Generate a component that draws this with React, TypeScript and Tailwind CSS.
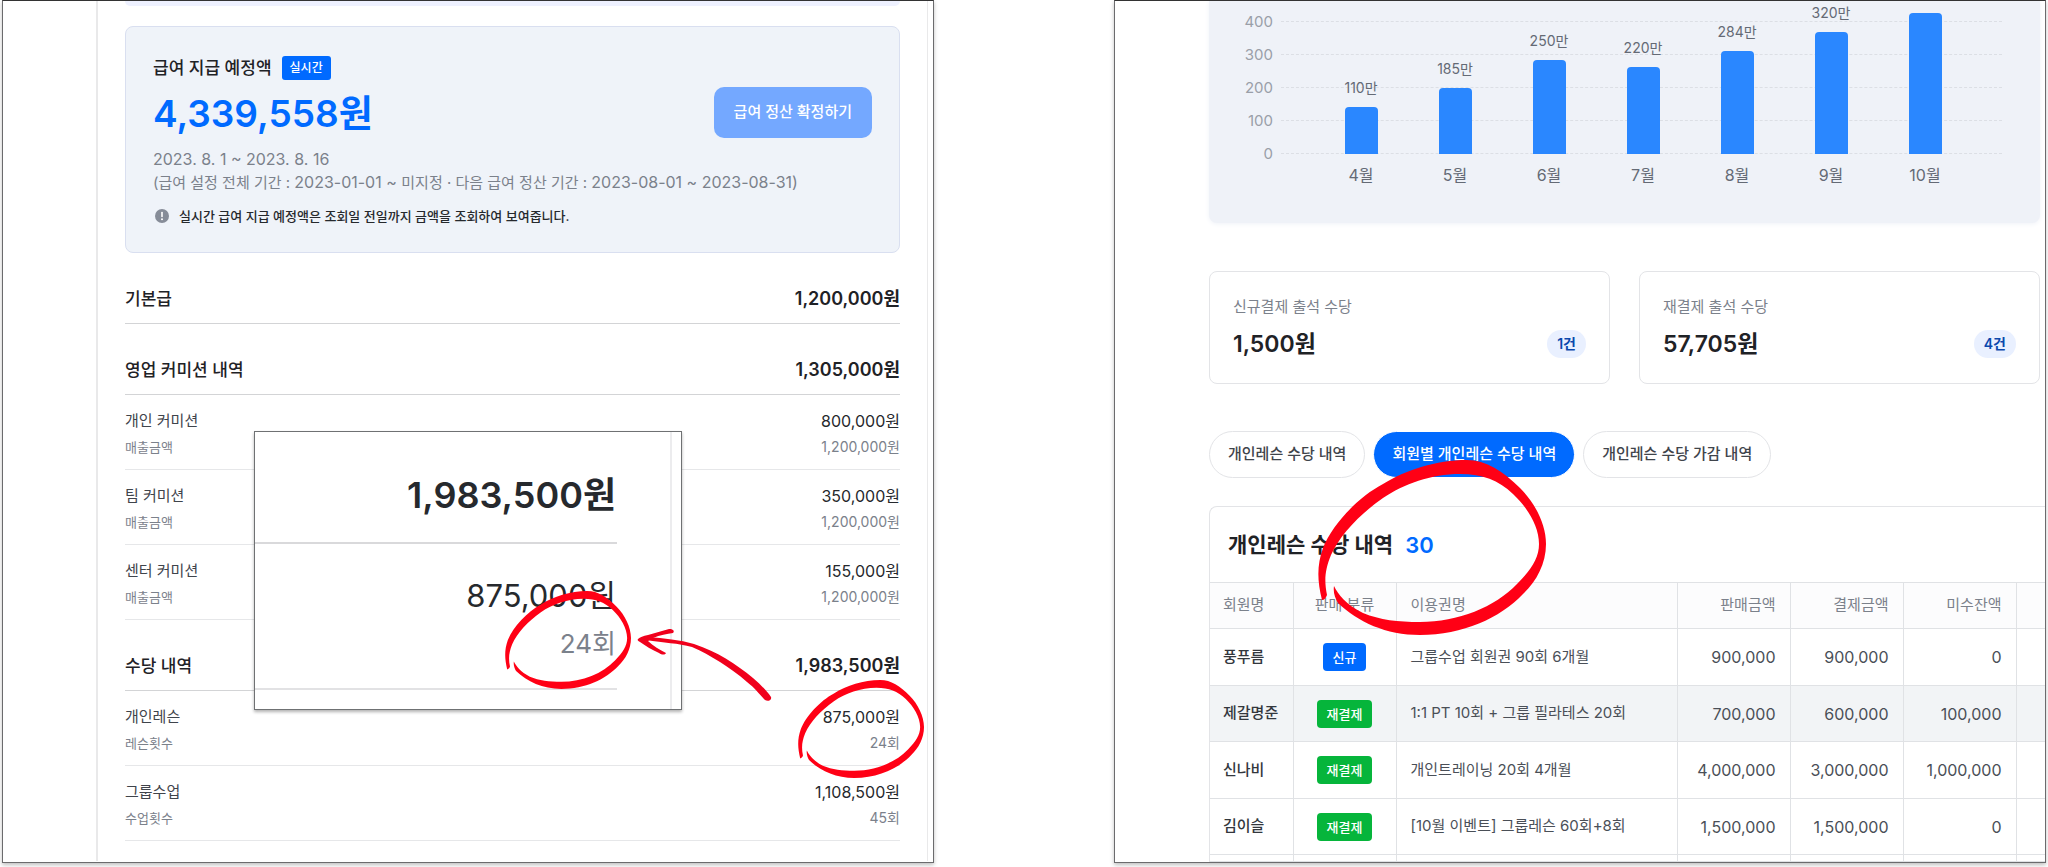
import React from 'react';
import clsx from 'clsx';

interface PayRow {
  label: string;
  sub: string;
  amount: string;
  subAmount: string;
}

interface PaySection {
  title: string;
  total: string;
  rows: PayRow[];
}

const sections: PaySection[] = [
  { title: '기본급', total: '1,200,000원', rows: [] },
  {
    title: '영업 커미션 내역',
    total: '1,305,000원',
    rows: [
      { label: '개인 커미션', sub: '매출금액', amount: '800,000원', subAmount: '1,200,000원' },
      { label: '팀 커미션', sub: '매출금액', amount: '350,000원', subAmount: '1,200,000원' },
      { label: '센터 커미션', sub: '매출금액', amount: '155,000원', subAmount: '1,200,000원' },
    ],
  },
  {
    title: '수당 내역',
    total: '1,983,500원',
    rows: [
      { label: '개인레슨', sub: '레슨횟수', amount: '875,000원', subAmount: '24회' },
      { label: '그룹수업', sub: '수업횟수', amount: '1,108,500원', subAmount: '45회' },
    ],
  },
];

const ticks = ['400', '300', '200', '100', '0'];

const months = [
  { name: '4월', label: '110만', height: 47 },
  { name: '5월', label: '185만', height: 66 },
  { name: '6월', label: '250만', height: 94 },
  { name: '7월', label: '220만', height: 87 },
  { name: '8월', label: '284만', height: 103 },
  { name: '9월', label: '320만', height: 122 },
  { name: '10월', label: '', height: 141 },
];

const stats = [
  { label: '신규결제 출석 수당', value: '1,500원', count: '1건' },
  { label: '재결제 출석 수당', value: '57,705원', count: '4건' },
];

const tabs = ['개인레슨 수당 내역', '회원별 개인레슨 수당 내역', '개인레슨 수당 가감 내역'];

const members = [
  { name: '풍푸름', kind: '신규', ticket: '그룹수업 회원권 90회 6개월', sale: '900,000', paid: '900,000', due: '0' },
  { name: '제갈명준', kind: '재결제', ticket: '1:1 PT 10회 + 그룹 필라테스 20회', sale: '700,000', paid: '600,000', due: '100,000' },
  { name: '신나비', kind: '재결제', ticket: '개인트레이닝 20회 4개월', sale: '4,000,000', paid: '3,000,000', due: '1,000,000' },
  { name: '김이슬', kind: '재결제', ticket: '[10월 이벤트] 그룹레슨 60회+8회', sale: '1,500,000', paid: '1,500,000', due: '0' },
];

const MarkerCircle: React.FC<{ className: string }> = ({ className }) => (
  <svg className={clsx('pointer-events-none absolute', className)} viewBox="0 0 228 175" preserveAspectRatio="none" fill="#ff0015" aria-hidden="true">
    <path d="M4 140 C-1 120 -1 105 5 88 C14 65 40 37 65 24 C88 10 118 0 149 0 C168 0 185 11 202 28 C217 43 228 64 228 84 C228 104 218 122 205 134 C182 158 145 175 102 175 C68 175 40 162 20 143 C17 138 15 132 16 126 C20 134 28 145 45 153 C62 160 80 162 102 162 C140 162 177 147 199 124 C213 110 221 98 221 84 C221 66 209 47 195 34 C180 20 165 14 142 14 C113 14 86 24 65 38 C42 54 22 75 13 95 C7 110 6 120 9 135 C8 138 6 140 4 140 Z" />
  </svg>
);

const MarkerArrow: React.FC = () => (
  <svg className="pointer-events-none absolute left-[631px] top-[623px] h-20 w-[140px]" viewBox="0 0 140 80" fill="#f0001c" aria-hidden="true">
    <path d="M14 13 C30 14 46 16 60 20 C84 28 102 40 119 54 C127 61 133 67 137 73 C138 76 134 78 131 76 C126 71 121 64 113 58 C104 50 95 44 86 38 C76 32 68 27 58 23 C44 19 30 19 12 16 Z" />
    <path d="M4 15 C6 13 9 12 14 11 L35 5 C39 5 41 7 39 9 C33 10 26 11 19 14 L14 17 C19 22 26 26 32 29 C31 31 28 31 25 29 C18 26 12 22 6 18 C4 17 3 16 4 15 Z" />
  </svg>
);

// Enlarged view of the lesson allowance amount
const Magnified: React.FC = () => (
  <div className="absolute left-[251px] top-[430px] flex w-[428px] border border-[#6f7173] bg-white pr-[9px] shadow-[0_2px_3px_rgba(0,0,0,0.3)]">
    <div className="flex-1 border-r-2 border-[#ececee] pb-[19px] pr-[53px] text-right text-[#26292d]">
      <div className="border-b-2 border-[#d9d9db] pb-[26px] pr-px pt-[42px] text-4xl font-semibold leading-[42px]">1,983,500원</div>
      <div className="border-b-2 border-[#e2e2e4] pb-7 pr-px pt-8">
        <div className="text-[31px] leading-10">875,000원</div>
        <div className="mt-3 text-[26px] leading-8 text-[#7b818b]">24회</div>
      </div>
    </div>
  </div>
);

const PayPanel: React.FC = () => (
  <section className="relative border border-[#6b6b6d] border-t-[#333] bg-white shadow-[0_2px_4px_rgba(0,0,0,0.25)]">
    <div className="ml-[93px] mr-[5px] border-l-2 border-r border-[#e9e9ea] px-[27px] pb-5">
      <div className="h-[5px] rounded-b-lg bg-[#eef1ff]" />

      <div className="mt-5 flex items-start rounded-lg border border-[#d9dff0] bg-[#eff3f9] px-[27px] pb-[25px]">
        <div className="w-0 flex-1 whitespace-nowrap">
          <div className="mt-[29px] flex items-center gap-2.5">
            <h2 className="text-[17px] font-medium leading-6 text-[#1f2226]">급여 지급 예정액</h2>
            <span className="rounded-[3px] bg-[#006aff] px-2 text-xs font-medium leading-6 text-white">실시간</span>
          </div>
          <p className="mt-3.5 text-[37px] font-semibold leading-10 text-[#006aff]">4,339,558원</p>
          <p className="mt-3.5 text-base leading-[23px] text-[#7b818b]">2023. 8. 1 ~ 2023. 8. 16</p>
          <p className="text-[15px] leading-[23px] text-[#7b818b]">
            (급여 설정 전체 기간 : <span className="text-base leading-[23px]">2023-01-01 ~ </span>미지정 · 다음 급여 정산 기간 :{' '}
            <span className="text-base leading-[23px]">2023-08-01 ~ 2023-08-31)</span>
          </p>
          <p className="mt-[11px] flex items-center gap-2.5 pl-0.5 text-[13px] font-medium leading-[22px] text-[#26292d]">
            <svg className="h-3.5 w-3.5" viewBox="0 0 14 14" aria-hidden="true">
              <circle cx="7" cy="7" r="7" fill="#868c98" />
              <path d="M7 3.5v4" stroke="#fff" strokeWidth="1.6" strokeLinecap="round" />
              <circle cx="7" cy="10.3" r="1" fill="#fff" />
            </svg>
            실시간 급여 지급 예정액은 조회일 전일까지 금액을 조회하여 보여줍니다.
          </p>
        </div>
        <button type="button" className="mt-[60px] h-[51px] shrink-0 whitespace-nowrap rounded-[10px] bg-[#74a8ff] px-5 text-[15px] font-medium text-white">
          급여 정산 확정하기
        </button>
      </div>

      {sections.map((section) => (
        <div key={section.title}>
          <div className="flex h-[71px] items-start justify-between border-b border-[#d3d4d6] pt-[34px] font-medium leading-6 text-[#1f2226]">
            <h3 className="text-[17px]">{section.title}</h3>
            <span className="text-lg font-semibold leading-6">{section.total}</span>
          </div>
          {section.rows.map((row) => (
            <div key={row.label} className="flex h-[75px] justify-between border-b border-[#e6e7e9] pt-[15px]">
              <div className="text-[15px] text-[#3f444b]">
                <p className="leading-[22px]">{row.label}</p>
                <p className="mt-1 text-[13px] leading-[22px] text-[#7b818b]">{row.sub}</p>
              </div>
              <div className="text-right text-[#26292d]">
                <p className="text-base leading-[22px]">{row.amount}</p>
                <p className="mt-1 text-sm leading-[22px] text-[#7b818b]">{row.subAmount}</p>
              </div>
            </div>
          ))}
        </div>
      ))}
    </div>

    <Magnified />
    <MarkerCircle className="left-[502px] top-[590px] h-[98px] w-[126px]" />
    <MarkerCircle className="left-[795px] top-[679px] h-[98px] w-[126px]" />
    <MarkerArrow />
  </section>
);

const Chart: React.FC = () => (
  <div className="mr-[5px] grid grid-cols-[64px_1fr] gap-x-2 rounded-b-lg bg-[#eff2f8] pb-[37px] pr-[38px] pt-5 shadow-[0_1px_5px_#eff2f8]">
    <div className="-my-2.5 flex flex-col justify-between text-right text-[15px] text-[#9a9fa8]">
      {ticks.map((tick) => (
        <span key={tick} className="leading-[21px]">{tick}</span>
      ))}
    </div>
    <div className="grid h-[133px]">
      <div className="col-start-1 row-start-1 flex flex-col justify-between">
        {ticks.map((tick) => (
          <div key={tick} className="border-t border-dashed border-[#dcdfe5]" />
        ))}
      </div>
      <div className="col-start-1 row-start-1 flex h-[133px] items-end pl-[33px] pr-[30px]">
        {months.map((month) => (
          <div key={month.name} className="flex flex-1 flex-col items-center">
            <span className="mb-2 text-sm leading-[22px] text-[#646a75]">{month.label}</span>
            <div className="w-[33px] rounded-t bg-[#2a87ff]" style={{ height: month.height }} />
          </div>
        ))}
      </div>
    </div>
    <div className="col-start-2 mt-2.5 flex pl-[33px] pr-[30px] text-center text-base leading-[22px] text-[#646a75]">
      {months.map((month) => (
        <span key={month.name} className="flex-1">{month.name}</span>
      ))}
    </div>
  </div>
);

const LessonPanel: React.FC = () => (
  <section className="relative overflow-hidden border border-[#6b6b6d] border-t-[#333] bg-white pl-[94px] shadow-[0_2px_4px_rgba(0,0,0,0.25)]">
    <Chart />

    <div className="mr-[5px] mt-12 grid grid-cols-2 gap-[29px]">
      {stats.map((stat) => (
        <div key={stat.label} className="h-[113px] rounded-lg border border-[#e3e4e7] px-[23px] pt-6">
          <p className="text-[15px] leading-[22px] text-[#7b818b]">{stat.label}</p>
          <div className="mt-3 flex items-center justify-between">
            <span className="text-[23px] font-semibold leading-7 text-[#1f2226]">{stat.value}</span>
            <span className="rounded-full bg-[#e9f0ff] px-2.5 text-sm font-semibold leading-7 text-[#0b48ad]">{stat.count}</span>
          </div>
        </div>
      ))}
    </div>

    <div className="mt-[47px] flex gap-2">
      {tabs.map((tab, i) => (
        <button
          key={tab}
          type="button"
          className={clsx(
            'h-[47px] whitespace-nowrap rounded-full border px-[18px] text-[15px] font-medium',
            i === 1 ? 'border-white bg-[#006aff] text-white' : 'border-[#e3e4e7] bg-white text-[#3f444b]',
          )}
        >
          {tab}
        </button>
      ))}
    </div>

    <div className="mt-7 rounded-tl-lg border-l border-t border-[#e3e4e7]">
      <h2 className="flex items-center gap-3 pb-[22px] pl-[18px] pt-[23px] text-[21px] font-semibold leading-[30px] text-[#1f2226]">
        개인레슨 수당 내역 <span className="text-[22px] text-[#006aff]">30</span>
      </h2>
      <table className="w-full table-fixed border-collapse text-[15px] text-[#4a4f57] [&_td]:border [&_td]:border-[#e0e2e5] [&_td]:px-3.5 [&_td]:py-0 [&_td:first-child]:border-l-0 [&_td:first-child]:pl-[13px] [&_td:last-child]:border-r-0 [&_th]:border [&_th]:border-[#e0e2e5] [&_th]:px-3.5 [&_th]:font-normal [&_th:first-child]:border-l-0 [&_th:first-child]:pl-[13px] [&_th:last-child]:border-r-0">
        <colgroup>
          <col className="w-[83px]" />
          <col className="w-[103px]" />
          <col />
          <col className="w-[113px]" />
          <col className="w-[113px]" />
          <col className="w-[113px]" />
          <col className="w-[29px]" />
        </colgroup>
        <thead>
          <tr className="h-[46px] bg-[#fcfcfd] text-left text-[#7b818b]">
            <th scope="col">회원명</th>
            <th scope="col" className="whitespace-nowrap text-center">판매 분류</th>
            <th scope="col">이용권명</th>
            <th scope="col" className="text-right">판매금액</th>
            <th scope="col" className="text-right">결제금액</th>
            <th scope="col" className="text-right">미수잔액</th>
            <td />
          </tr>
        </thead>
        <tbody>
          {members.map((m) => (
            <tr key={m.name} className="h-14 odd:h-[57px] nth-2:bg-[#f2f4f6]">
              <td className="whitespace-nowrap font-medium text-[#33373d]">{m.name}</td>
              <td className="text-center">
                <span
                  className={clsx(
                    'inline-block rounded px-2.5 text-[13px] font-medium leading-7 text-white',
                    m.kind === '신규' ? 'bg-[#006aff]' : 'bg-[#06b53b]',
                  )}
                >
                  {m.kind}
                </span>
              </td>
              <td className="whitespace-nowrap">{m.ticket}</td>
              <td className="text-right text-base">{m.sale}</td>
              <td className="text-right text-base">{m.paid}</td>
              <td className="text-right text-base">{m.due}</td>
              <td />
            </tr>
          ))}
          <tr className="h-[7px]">
            <td /><td /><td /><td /><td /><td /><td />
          </tr>
        </tbody>
      </table>
    </div>

    <MarkerCircle className="left-[203px] top-[459px] h-[175px] w-[228px]" />
  </section>
);

const App: React.FC = () => (
  <main className="grid grid-cols-2 gap-[180px] bg-white px-0.5 pb-[5px] font-['Inter','Noto_Sans_CJK_KR',sans-serif]">
    <PayPanel />
    <LessonPanel />
  </main>
);

export default App;
